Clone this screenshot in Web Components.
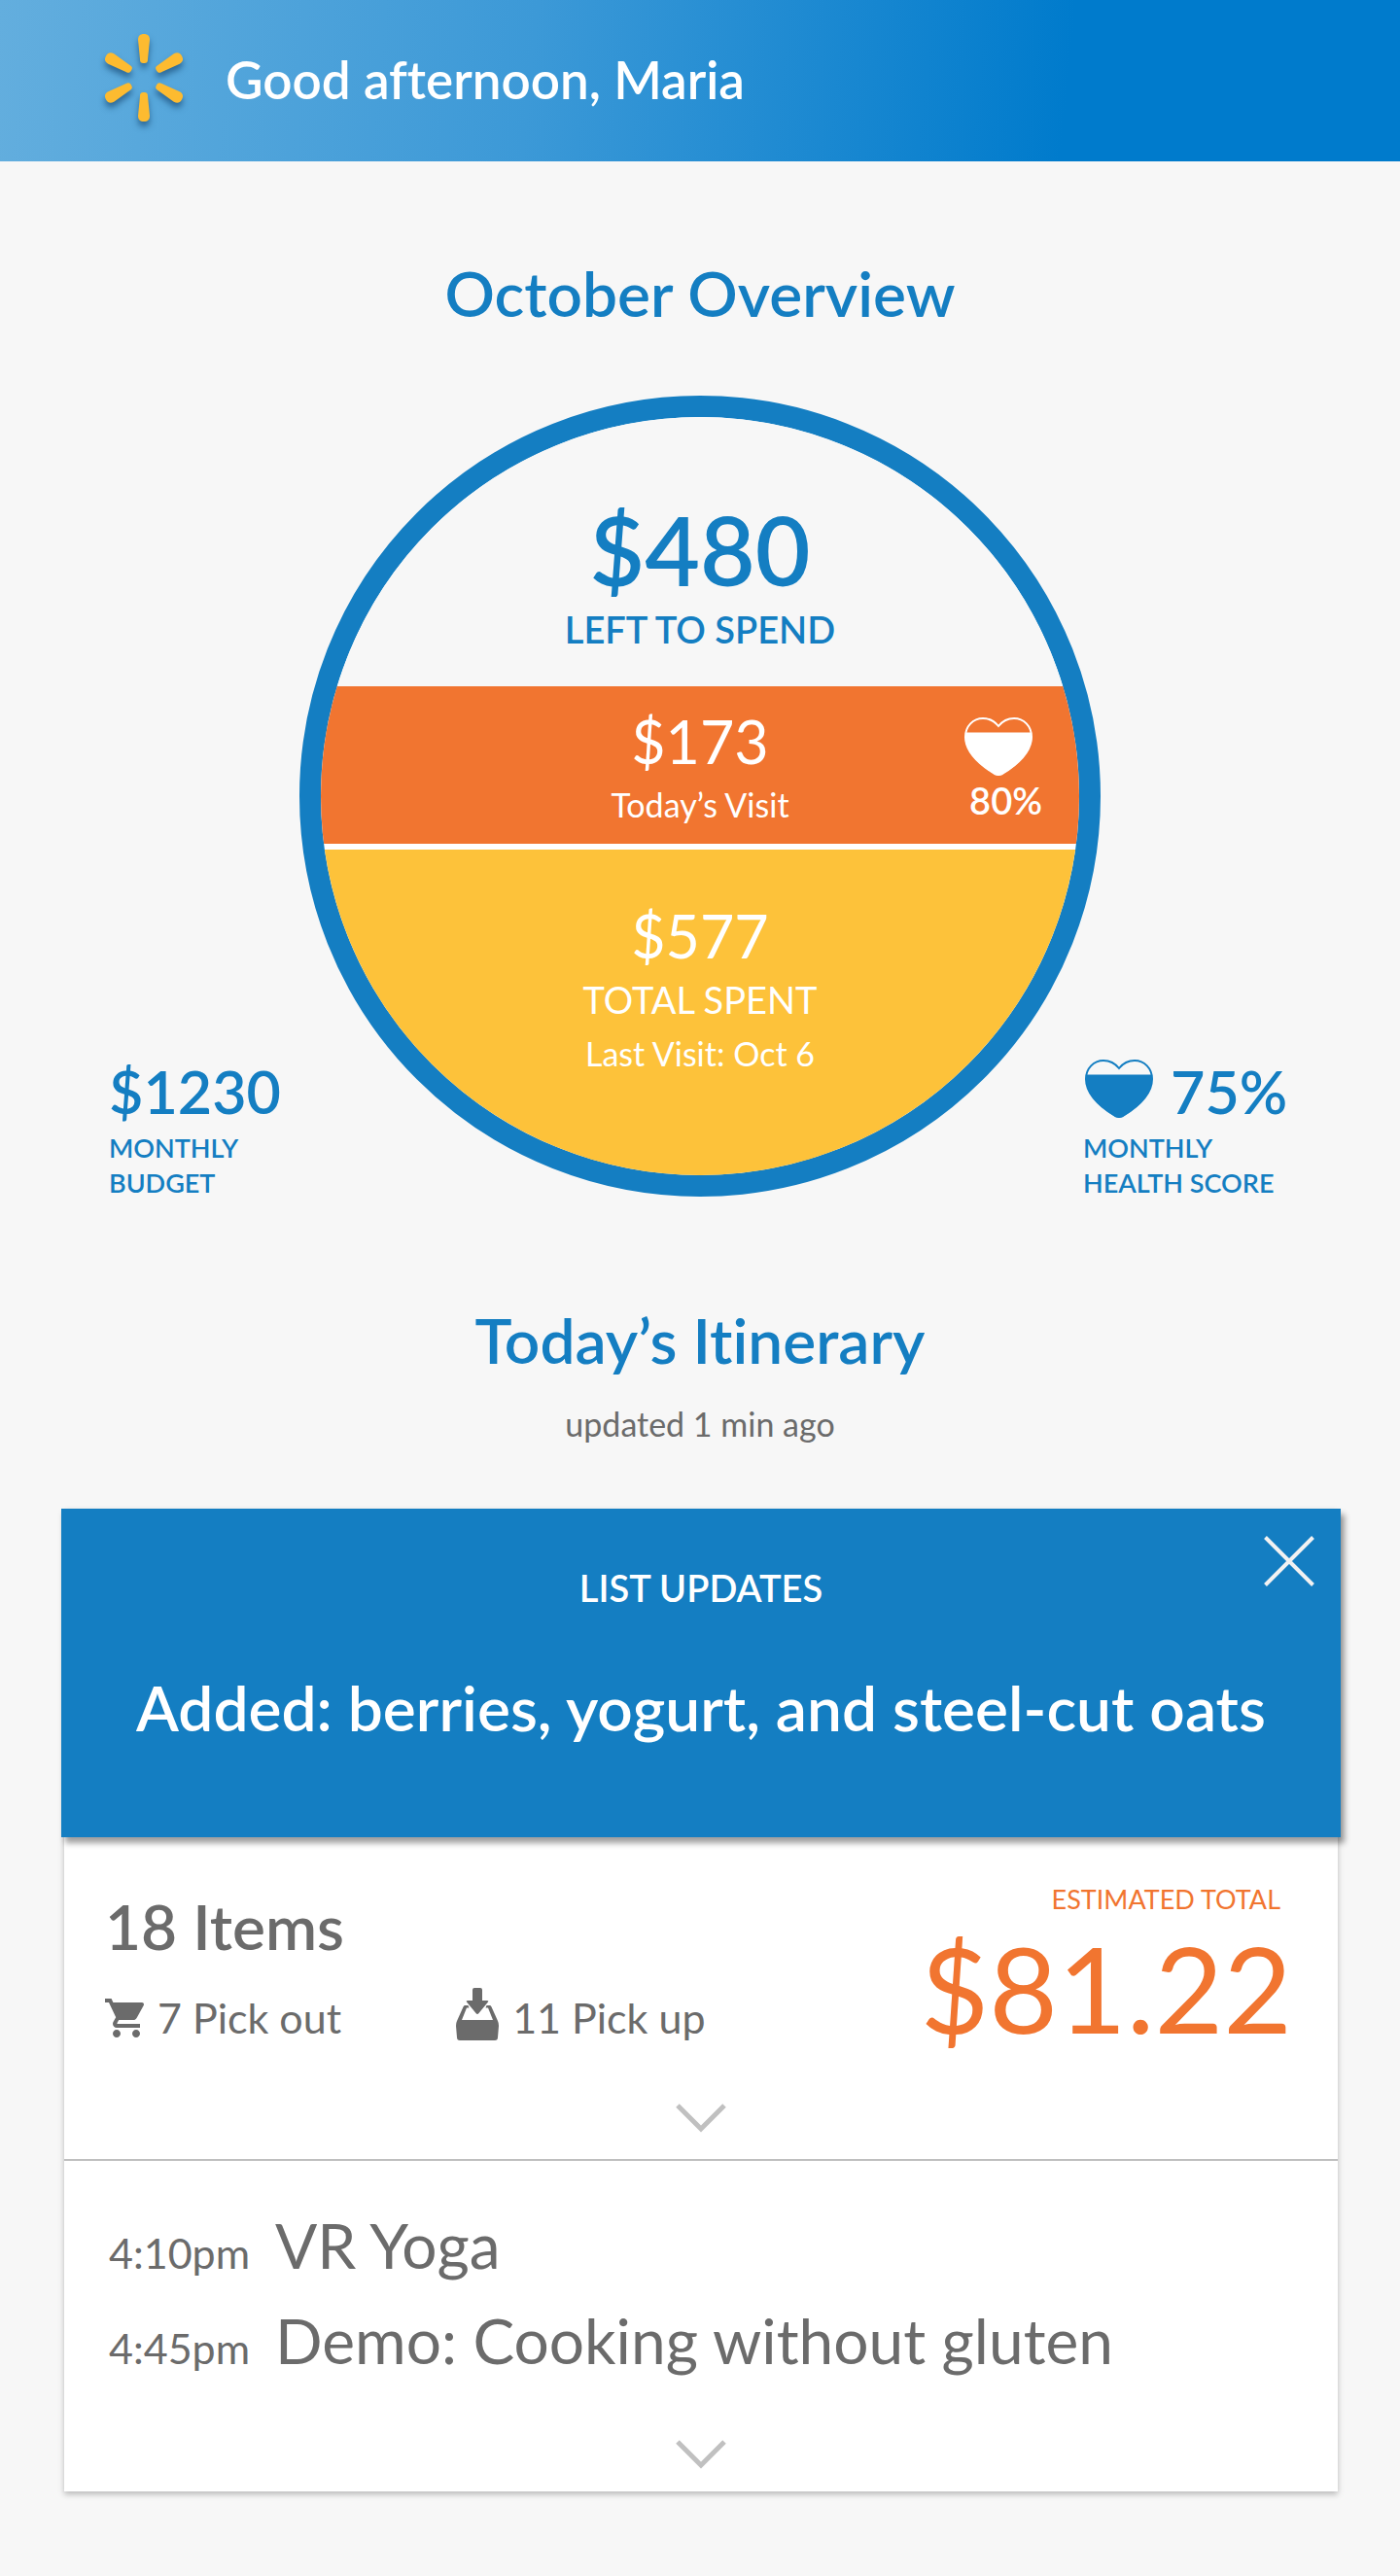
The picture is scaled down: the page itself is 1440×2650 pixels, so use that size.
<!DOCTYPE html>
<html lang="en">
<head>
<meta charset="utf-8">
<meta name="viewport" content="width=device-width, initial-scale=1">
<title>October Overview</title>
<style>
  :root {
    --blue: #147ec2; --orange: #f17530; --yellow: #fdc23a; --grey: #6b6b6b; --page: #f7f7f7;
    --fs-xs: 27px; --fs-note: 34px; --fs-sm: 38px; --fs-md: 43px; --fs-greeting: 53px; --fs-amount: 61px;
    --fs-lg: 64px; --fs-xl: 98px; --fs-xxl: 122px; --medium: 600;
  }
  body { margin: 0; background: var(--page); color: var(--grey); font-family: Lato, "Open Sans", sans-serif; font-variant-ligatures: none; }
</style>
</head>
<body>
<shopping-dashboard></shopping-dashboard>
<script>
const define = (name, html) => {
  const template = document.createElement('template');
  template.innerHTML = '<style>*{box-sizing:border-box}h1,h2,p,ul{margin:0;padding:0;font-weight:inherit}svg{display:block}button{border:0;padding:0;background:none;color:inherit;cursor:pointer}</style>' + html;
  customElements.define(name, class extends HTMLElement {
    constructor() {
      super();
      this.attachShadow({ mode: 'open' }).append(template.content.cloneNode(true));
    }
  });
};

define('spark-logo', `
<style>:host{display:block;filter:drop-shadow(0 5px 3px rgba(0,40,80,.5))}</style>
<svg width="80" height="90" viewBox="-40 -45 80 90" fill="#fdbb30" aria-hidden="true">
  <defs><path id="ray" d="M-6-39C-6-43-4-45 0-45S6-43 6-39L4-19C4-16 3-15 0-15S-4-16-4-19Z"/></defs>
  <use href="#ray"/><use href="#ray" transform="rotate(60)"/><use href="#ray" transform="rotate(120)"/>
  <use href="#ray" transform="rotate(180)"/><use href="#ray" transform="rotate(240)"/><use href="#ray" transform="rotate(300)"/>
</svg>`);

define('heart-meter', `
<style>:host{display:block;width:70px;height:60px}</style>
<svg width="70" height="60" viewBox="0 0 70 60" aria-hidden="true">
  <path fill="none" stroke="currentColor" stroke-width="2" d="M35 9C31 4 26 1 19 1C9 1 1 9 1 20C1 37 18 50 31 58Q35 60 39 58C52 50 69 37 69 20C69 9 61 1 51 1C44 1 39 4 35 9Z"/>
  <path fill="currentColor" d="M1 15.500H69C71 35 54 50 39 58.500Q35 60.500 31 58.500C16 50-1 35 1 15.500Z"/>
</svg>`);

define('app-header', `
<style>
  :host{display:flex;align-items:center;gap:44px;height:166px;padding:0 108px 6px;color:#fff;
    background:linear-gradient(96deg,#63aede 0%,#3c99d7 38%,#007bcc 76%)}
  h1{padding-top:4px;font-size:var(--fs-greeting);font-weight:var(--medium);line-height:72px}
</style>
<spark-logo></spark-logo><h1><slot></slot></h1>`);

define('section-title', `
<style>
  :host{display:block;text-align:center}
  h2{font-size:var(--fs-lg);font-weight:var(--medium);line-height:80px;color:var(--blue)}
  ::slotted(p){font-size:var(--fs-note);line-height:48px}
</style>
<h2><slot></slot></h2><slot name="note"></slot>`);

define('side-stat', `
<style>
  :host{display:block;color:var(--blue);font-weight:var(--medium)}
  .value{display:flex;align-items:center;gap:18px;font-size:var(--fs-amount);line-height:80px}
  .label{font-size:var(--fs-xs);line-height:36px}
  ::slotted(heart-meter){margin:0 0 6px 2px}
</style>
<div class="value"><slot name="icon"></slot><slot name="value"></slot></div>
<div class="label"><slot></slot></div>`);

define('budget-circle', `
<style>
  :host{display:flex;flex-direction:column;width:824px;max-width:100%;aspect-ratio:1;border:22px solid var(--blue);
    border-radius:50%;overflow:hidden;text-align:center;background:#fff}
  .amount{font-size:var(--fs-amount);line-height:74px}
  .label{font-size:var(--fs-sm);line-height:56px}
  .label.note{font-size:var(--fs-note)}
  .left{flex:0 0 277px;padding-top:80px;background:var(--page);color:var(--blue);font-weight:var(--medium)}
  .left .amount{font-size:var(--fs-xl);line-height:112px}
  .left .label{line-height:52px}
  .visit{flex:0 0 162px;display:grid;grid-template-columns:1fr auto 1fr;padding:20px 38px 0;background:var(--orange);color:#fff}
  .visit .main{grid-column:2}
  .score{justify-self:end;width:80px;padding-top:12px;display:flex;flex-direction:column;font-weight:var(--medium)}
  .score span{align-self:flex-end;font-size:var(--fs-sm);line-height:50px}
  .spent{flex:1;margin-top:6px;padding-top:52px;background:var(--yellow);color:#fff}
</style>
<div class="left"><div class="amount">$480</div><div class="label">LEFT TO SPEND</div></div>
<div class="visit">
  <div class="main"><div class="amount">$173</div><div class="label note">Today’s Visit</div></div>
  <div class="score"><heart-meter></heart-meter><span>80%</span></div>
</div>
<div class="spent"><div class="amount">$577</div><div class="label">TOTAL SPENT</div><div class="label note">Last Visit: Oct 6</div></div>`);

define('month-overview', `
<style>
  :host{display:grid;grid-template-columns:1fr auto;padding-bottom:4px}
  budget-circle{grid-area:1/1/2/3;justify-self:center}
  side-stat{grid-area:1/1;align-self:end;margin:0 112px -4px}
  side-stat.health{grid-area:1/2;min-width:214px}
</style>
<budget-circle></budget-circle>
<side-stat><span slot="value">$1230</span>MONTHLY<br>BUDGET</side-stat>
<side-stat class="health"><heart-meter slot="icon"></heart-meter><span slot="value">75%</span>MONTHLY<br>HEALTH SCORE</side-stat>`);

define('list-update', `
<style>
  :host{display:block;position:relative;margin:0 -3px;height:338px;padding-top:57px;background:var(--blue);color:#fff;
    text-align:center;font-weight:var(--medium);box-shadow:4px 6px 6px rgba(0,0,0,.38)}
  p{font-size:var(--fs-sm);line-height:48px}
  h2{margin-top:60px;font-size:var(--fs-lg);line-height:80px}
  button{position:absolute;top:28px;right:27px}
</style>
<p>LIST UPDATES</p><h2><slot></slot></h2>
<button aria-label="Dismiss"><svg width="52" height="52" viewBox="0 0 52 52" fill="none" stroke="#f2f2f2" stroke-width="4"><path d="M1.500 1.500 50.500 50.500M50.500 1.500 1.500 50.500"/></svg></button>`);

define('expand-button', `
<style>:host{display:flex;justify-content:center}</style>
<button aria-label="Show more"><svg width="52" height="30" viewBox="0 0 52 30" fill="none" stroke="#c0c0c0" stroke-width="5"><path d="M2 2 26 26 50 2"/></svg></button>`);

define('cart-summary', `
<style>
  :host{display:block;height:331px;padding-top:46px}
  .row{display:flex;justify-content:space-between;height:228px;padding:0 47px 0 42px}
  h2{margin-top:6px;font-size:var(--fs-lg);font-weight:var(--medium);line-height:80px}
  ul{display:flex;gap:118px;margin-top:23px;list-style:none}
  li{display:flex;align-items:center;gap:14px;font-size:var(--fs-md);line-height:62px;white-space:nowrap}
  .up svg{margin-bottom:8px}
  .total{color:var(--orange);text-align:right}
  .cap{font-size:var(--fs-xs);line-height:36px;padding-right:12px}
  .sum{font-size:var(--fs-xxl);line-height:146px}
</style>
<div class="row">
  <div><h2>18 Items</h2>
    <ul>
      <li><svg width="40" height="40" viewBox="1 2 20 20" fill="currentColor" aria-hidden="true"><path d="M7 18c-1.100 0-1.990.9-1.990 2S5.900 22 7 22s2-.9 2-2-.9-2-2-2zM1 2v2h2l3.600 7.590-1.350 2.450c-.16.280-.25.610-.25.960 0 1.100.9 2 2 2h12v-2H7.420c-.14 0-.25-.11-.25-.25l.03-.12.900-1.630h7.450c.75 0 1.410-.41 1.750-1.030l3.580-6.490c.08-.14.120-.31.120-.48 0-.55-.45-1-1-1H5.210l-.94-2H1zm16 16c-1.100 0-1.990.9-1.990 2s.89 2 1.990 2 2-.9 2-2-.9-2-2-2z"/></svg>7 Pick out</li>
      <li class="up"><svg width="44" height="54" viewBox="0 0 44 54" fill="currentColor" aria-hidden="true"><path d="M19 0h6q2 0 2 2v11h5q2 0 1 1.500L23.500 26q-1.500 2-3 0L11 14.500Q10 13 12 13h5V2q0-2 2-2Z"/><path fill-rule="evenodd" d="M9 18h3.500l1 2.500H11L6 33H38L33 20.500H30.500L31.500 18H35Q36 18 36.500 19.500L43 34Q44 36 44 39L43 51Q43 54 40 54H4Q1 54 1 51L0 39Q0 36 1 34L7.500 19.500Q8 18 9 18Z"/></svg>11 Pick up</li>
    </ul>
  </div>
  <div class="total"><div class="cap">ESTIMATED TOTAL</div><div class="sum">$81.22</div></div>
</div>
<expand-button></expand-button>`);

define('agenda-item', `
<style>
  :host{display:flex;align-items:baseline;gap:26px;font-size:var(--fs-lg);line-height:98px}
  ::slotted(time){font-size:var(--fs-md);line-height:48px}
</style>
<slot name="time"></slot><span><slot></slot></span>`);

define('agenda-list', `
<style>
  :host{display:block;height:342px;padding-top:38px;border-top:2px solid #bfbfbf;box-sizing:border-box}
  .items{height:249px;padding-left:46px}
</style>
<div class="items"><slot></slot></div><expand-button></expand-button>`);

define('itinerary-card', `
<style>:host{display:block;margin:0 64px 0 66px;background:#fff;box-shadow:0 3px 6px rgba(0,0,0,.25)}</style>
<slot></slot>`);

define('shopping-dashboard', `
<style>
  :host{display:block;padding-bottom:87px}
  main{display:block}
  .overview{padding:96px 0 65px}
  .today{padding:104px 0 63px}
  .today p{padding-top:22px}
</style>
<app-header>Good afternoon, Maria</app-header>
<main>
  <section-title class="overview">October Overview</section-title>
  <month-overview></month-overview>
  <section-title class="today">Today’s Itinerary<p slot="note">updated 1 min ago</p></section-title>
  <itinerary-card>
    <list-update>Added: berries, yogurt, and steel-cut oats</list-update>
    <cart-summary></cart-summary>
    <agenda-list>
      <agenda-item><time slot="time">4:10pm</time>VR Yoga</agenda-item>
      <agenda-item><time slot="time">4:45pm</time>Demo: Cooking without gluten</agenda-item>
    </agenda-list>
  </itinerary-card>
</main>`);
</script>
</body>
</html>
